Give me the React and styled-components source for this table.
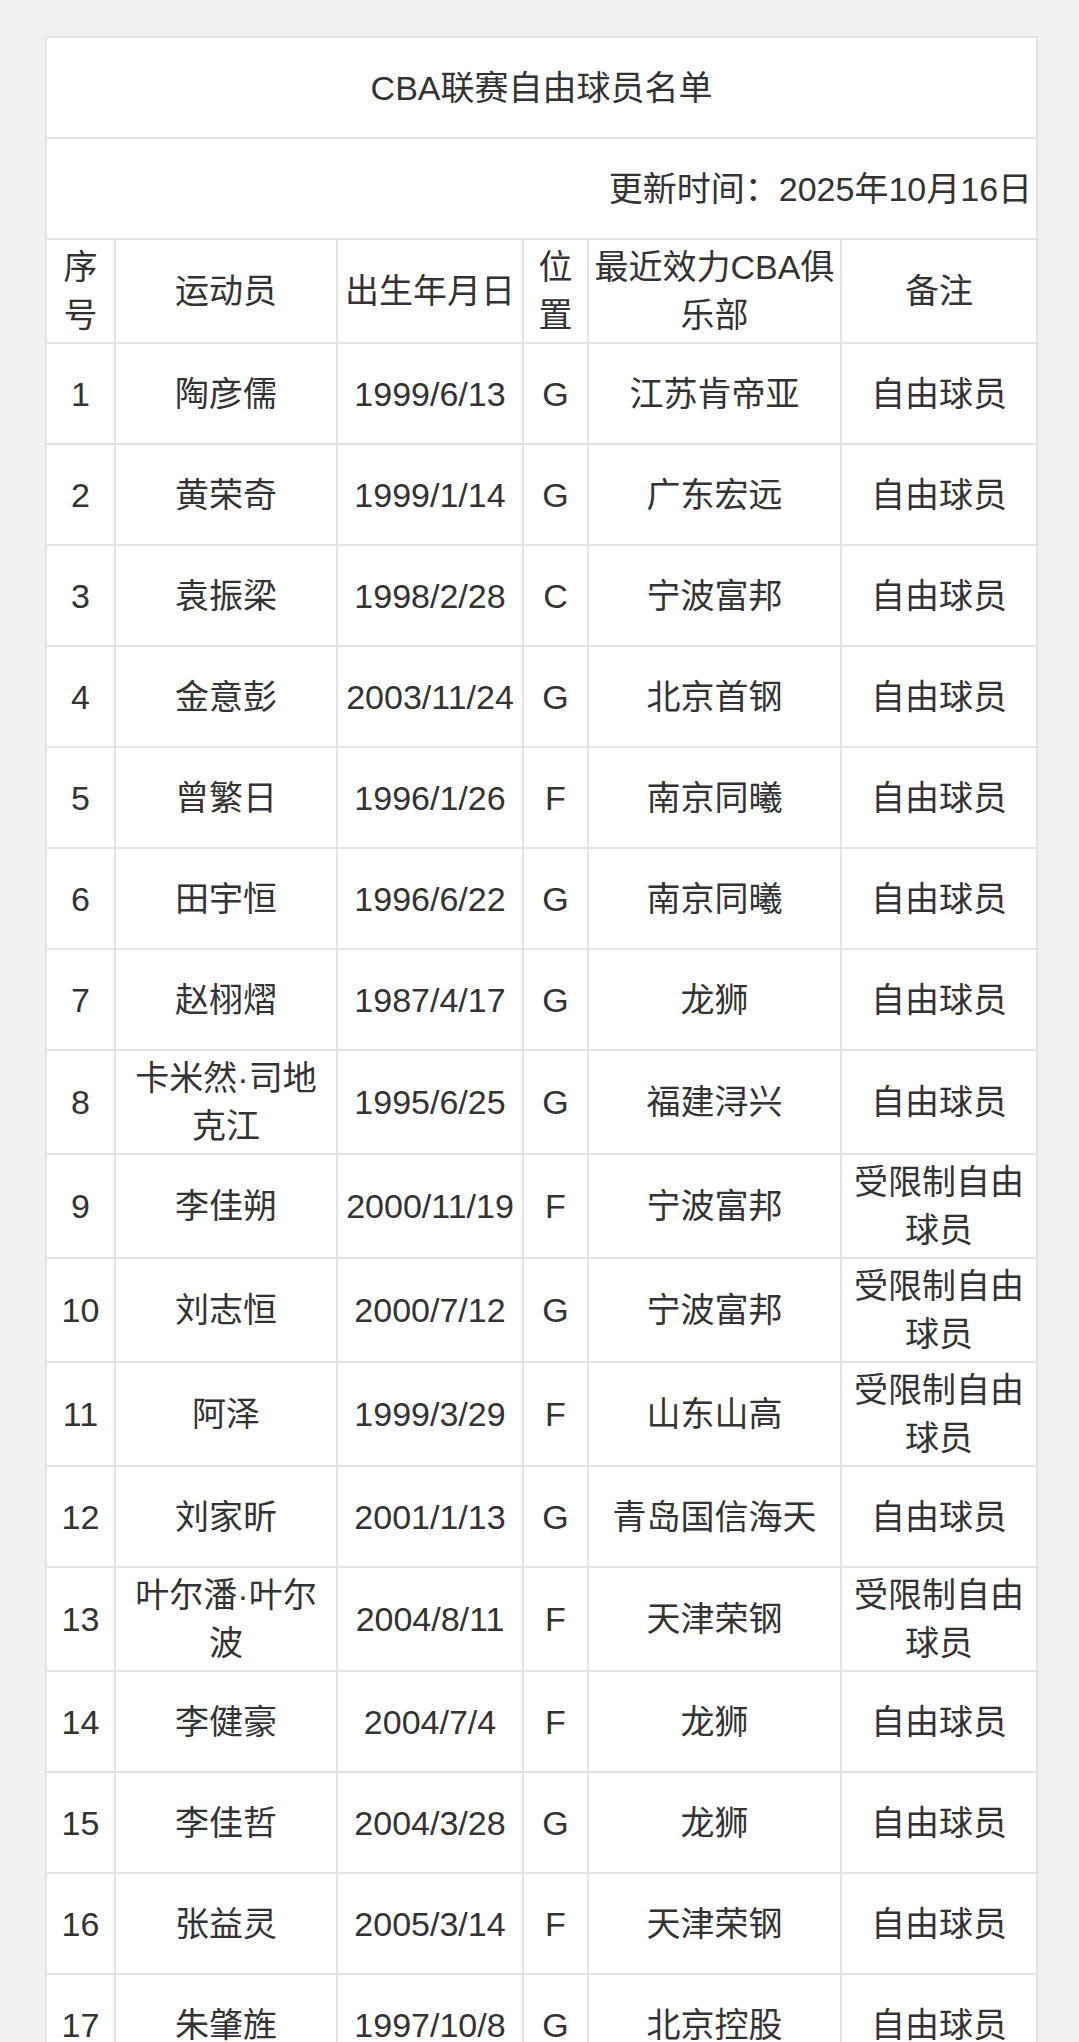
import React from "react";
import styled, { createGlobalStyle } from "styled-components";

const GlobalStyle = createGlobalStyle`
  html, body {
    margin: 0;
    padding: 0;
    background: #f1f1f1;
  }
  body {
    font-family: "Liberation Sans", "Noto Sans CJK SC", sans-serif;
    color: #333;
  }
`;

const Page = styled.div`
  padding: 36px 43px 40px 45px;
`;

const Table = styled.table`
  width: 991px;
  table-layout: fixed;
  border-collapse: collapse;
  background: #fff;
  font-size: 34px;
  line-height: 48px;
`;

const Cell = styled.td`
  border: 2px solid #e4e4e4;
  padding: 3px ${(p) => p.$pad || 2}px;
  height: 93px;
  text-align: ${(p) => p.$align || "center"};
  vertical-align: middle;
  word-break: break-all;
`;

const TitleCell = styled(Cell)`
  padding: 3px 4px;
`;

const HeadCell = styled(Cell).attrs({ as: "th" })`
  font-weight: 400;
`;

const cols = [69, 222, 186, 65, 253, 196];
const pads = [2, 12, 2, 2, 2, 4];

const players = [
  ["1", "陶彦儒", "1999/6/13", "G", "江苏肯帝亚", "自由球员"],
  ["2", "黄荣奇", "1999/1/14", "G", "广东宏远", "自由球员"],
  ["3", "袁振梁", "1998/2/28", "C", "宁波富邦", "自由球员"],
  ["4", "金意彭", "2003/11/24", "G", "北京首钢", "自由球员"],
  ["5", "曾繁日", "1996/1/26", "F", "南京同曦", "自由球员"],
  ["6", "田宇恒", "1996/6/22", "G", "南京同曦", "自由球员"],
  ["7", "赵栩熠", "1987/4/17", "G", "龙狮", "自由球员"],
  ["8", "卡米然·司地克江", "1995/6/25", "G", "福建浔兴", "自由球员"],
  ["9", "李佳朔", "2000/11/19", "F", "宁波富邦", "受限制自由球员"],
  ["10", "刘志恒", "2000/7/12", "G", "宁波富邦", "受限制自由球员"],
  ["11", "阿泽", "1999/3/29", "F", "山东山高", "受限制自由球员"],
  ["12", "刘家昕", "2001/1/13", "G", "青岛国信海天", "自由球员"],
  ["13", "叶尔潘·叶尔波", "2004/8/11", "F", "天津荣钢", "受限制自由球员"],
  ["14", "李健豪", "2004/7/4", "F", "龙狮", "自由球员"],
  ["15", "李佳哲", "2004/3/28", "G", "龙狮", "自由球员"],
  ["16", "张益灵", "2005/3/14", "F", "天津荣钢", "自由球员"],
  ["17", "朱肇旌", "1997/10/8", "G", "北京控股", "自由球员"],
];

const headers = ["序号", "运动员", "出生年月日", "位置", "最近效力CBA俱乐部", "备注"];

const App = () => {
  return (
    <Page>
      <GlobalStyle />
      <Table>
        <colgroup>
          {cols.map((w, i) => (
            <col key={i} style={{ width: w }} />
          ))}
        </colgroup>
        <tbody>
          <tr>
            <TitleCell colSpan={6}>CBA联赛自由球员名单</TitleCell>
          </tr>
          <tr>
            <TitleCell colSpan={6} $align="right">
              更新时间：2025年10月16日
            </TitleCell>
          </tr>
          <tr>
            {headers.map((h, i) => (
              <HeadCell key={i} $pad={pads[i]}>
                {h}
              </HeadCell>
            ))}
          </tr>
          {players.map((row) => (
            <tr key={row[0]}>
              {row.map((v, i) => (
                <Cell key={i} $pad={pads[i]}>
                  {v}
                </Cell>
              ))}
            </tr>
          ))}
        </tbody>
      </Table>
    </Page>
  );
};

export default App;
